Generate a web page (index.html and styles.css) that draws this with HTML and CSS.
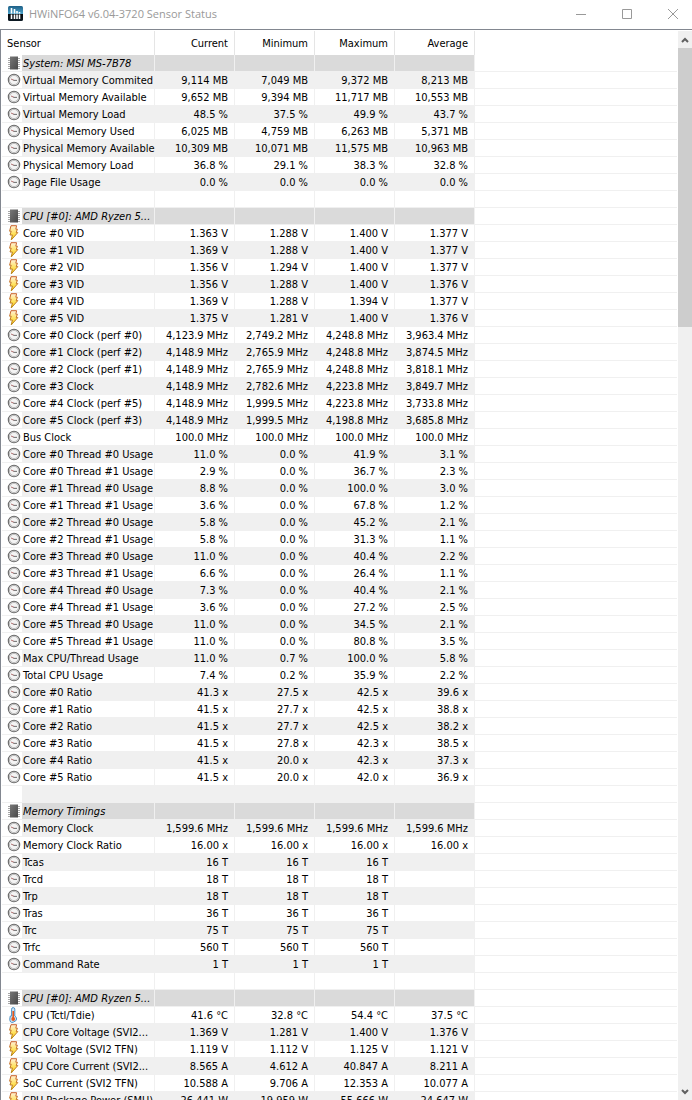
FILE: index.html
```html
<!DOCTYPE html>
<html lang="en">
<head>
<meta charset="utf-8">
<title>HWiNFO64 v6.04-3720 Sensor Status</title>
<link rel="stylesheet" href="styles.css">
</head>
<body>
<svg class="symbols" aria-hidden="true">
  <defs>
    <linearGradient id="bolt-fill" x1="0" y1="0" x2="0" y2="1">
      <stop offset="0" stop-color="#fff0d8"/>
      <stop offset="0.5" stop-color="#ffe468"/>
      <stop offset="1" stop-color="#f6c800"/>
    </linearGradient>
    <linearGradient id="bolt-edge" x1="0" y1="0" x2="0" y2="1">
      <stop offset="0" stop-color="#c9622c"/>
      <stop offset="1" stop-color="#b98a20"/>
    </linearGradient>
    <linearGradient id="chip-fill" x1="0" y1="0" x2="1" y2="1">
      <stop offset="0" stop-color="#777"/>
      <stop offset="1" stop-color="#484848"/>
    </linearGradient>
    <linearGradient id="logo-fill" x1="0" y1="0" x2="0" y2="1">
      <stop offset="0" stop-color="#1d5f86"/>
      <stop offset="0.5" stop-color="#4aa0c8"/>
      <stop offset="0.56" stop-color="#05090d"/>
      <stop offset="1" stop-color="#0d1a24"/>
    </linearGradient>
    <symbol id="clock" viewBox="0 0 14 16">
      <circle cx="7" cy="8" r="5.7" fill="#f4f4f4" stroke="#6a6a6a" stroke-width="1.1"/>
      <circle cx="7" cy="8" r="4.6" fill="none" stroke="#bcbcbc" stroke-width="1"/>
      <path d="M4 7L7 8.3" stroke="#b07070" stroke-width="1"/>
      <path d="M6.5 8.4H10" stroke="#777" stroke-width="1.1"/>
    </symbol>
    <symbol id="chip" viewBox="0 0 14 16">
      <path d="M1 3.5H13M1 5.5H13M1 7.5H13M1 9.5H13M1 11.5H13M1 13.5H13" stroke="#a8a8a8" stroke-width="1"/>
      <rect x="3" y="1.5" width="8" height="13" fill="url(#chip-fill)"/>
    </symbol>
    <symbol id="bolt" viewBox="0 0 14 16">
      <path d="M4 .7H9.6L8.8 4.2H10.4L9.2 7.6H10.8L4.2 15L5.4 10H3L4.2 6.2H2.6Z" fill="url(#bolt-fill)" stroke="url(#bolt-edge)" stroke-width="1"/>
    </symbol>
    <symbol id="thermo" viewBox="0 0 14 16">
      <path d="M4.6 9V2.2Q4.6 .6 6.2 .6T7.8 2.2V9Q9.6 10 9.6 12T6.2 15.2T2.8 12T4.6 9Z" fill="#cfe6f7" stroke="#4a8fc4" stroke-width="1"/>
      <path d="M6.2 4V12" stroke="#e2571e" stroke-width="1.6"/>
      <circle cx="6.2" cy="12" r="1.9" fill="#e2571e"/>
    </symbol>
  </defs>
</svg>

<div class="window">
  <header class="titlebar">
    <svg class="logo" viewBox="0 0 15 15" aria-hidden="true">
      <rect width="15" height="15" rx="1.5" fill="url(#logo-fill)"/>
      <path d="M3.5 2V7.5M6.5 3V7.5M9 5V7.5M11.5 6V7.5M3.5 8.5V13M6.5 8.5V13M9 8.5V13M11.5 8.5V13" stroke="#fff" stroke-width="1.6"/>
    </svg>
    <h1 class="title">HWiNFO64 v6.04-3720 Sensor Status</h1>
    <div class="controls">
      <button class="control" type="button" aria-label="Minimize"><svg viewBox="0 0 10 10"><path d="M0 5.5H10"/></svg></button>
      <button class="control" type="button" aria-label="Maximize"><svg viewBox="0 0 10 10"><path d="M.5 .5H9.5V9.5H.5Z"/></svg></button>
      <button class="control" type="button" aria-label="Close"><svg viewBox="0 0 10 10"><path d="M0 0L10 10M10 0L0 10"/></svg></button>
    </div>
  </header>
  <main class="content">
    <div class="list">
      <table class="sensors">
        <colgroup><col class="col-name"><col class="col-value"><col class="col-value"><col class="col-value"><col class="col-value"><col></colgroup>
        <thead>
          <tr><th scope="col">Sensor</th><th scope="col">Current</th><th scope="col">Minimum</th><th scope="col">Maximum</th><th scope="col">Average</th><td class="rest"></td></tr>
        </thead>
        <tbody id="rows"></tbody>
      </table>
    </div>
    <div class="scrollbar">
      <button class="arrow" type="button" aria-label="Scroll up"><svg viewBox="0 0 8 6"><path d="M1 5L4 2L7 5"/></svg></button>
      <div class="track"><div class="thumb"></div></div>
      <button class="arrow" type="button" aria-label="Scroll down"><svg viewBox="0 0 8 6"><path d="M1 1L4 4L7 1"/></svg></button>
    </div>
  </main>
</div>
<script src="sensors.js"></script>
</body>
</html>
```
FILE: styles.css
```css
* { box-sizing: border-box; }

body {
  margin: 0;
  background: #fff;
  color: #000;
  font-family: "DejaVu Sans Condensed", "DejaVu Sans", sans-serif;
  font-size: 11px;
}

.symbols { position: absolute; width: 0; height: 0; }

.window {
  display: flex;
  flex-direction: column;
  height: 100vh;
  overflow: hidden;
}

.titlebar {
  display: flex;
  align-items: center;
  flex: none;
  height: 29px;
  padding: 0 4px 2px 8px;
}

.logo { width: 15px; height: 15px; }

.title {
  flex: 1;
  margin: 0 0 0 6px;
  color: #999;
  font: 400 11px/16px "Open Sans", sans-serif;
}

.controls { display: flex; gap: 16px; }

.control {
  display: grid;
  place-items: center;
  width: 30px;
  height: 26px;
  padding: 0;
  border: 0;
  background: none;
}

.control svg {
  width: 10px;
  height: 10px;
  fill: none;
  stroke: #999;
  stroke-width: 1;
}

.content {
  display: flex;
  flex: 1;
  min-height: 0;
  padding-top: 1px;
  border-top: 1px solid #828790;
  border-left: 1px solid #828790;
}

.list {
  flex: 1;
  min-width: 0;
  margin: 0 1px;
  overflow: hidden;
}

.sensors {
  width: 100%;
  table-layout: fixed;
  border-collapse: separate;
  border-spacing: 0;
}

.col-name { width: 153px; }
.col-value { width: 80px; }

.sensors th,
.sensors td {
  height: 17px;
  padding: 2px 6px 0 0;
  border-right: 1px solid #f0f0f0;
  border-bottom: 1px solid #f0f0f0;
  font-weight: 400;
  line-height: 14px;
  text-align: right;
  white-space: nowrap;
}

.sensors thead th {
  height: 24px;
  border-right-color: #e5e5e5;
  border-bottom: 0;
}

.sensors thead th:first-child { padding-left: 5px; text-align: left; }
.sensors thead .rest { border-bottom: 0; }
.sensors .rest { border-right: 0; background: #fff; }

.sensors tbody th { padding: 0; text-align: left; }
.sensors tbody tr:nth-child(even) { background: #f0f0f0; }
.sensors tbody tr.group { background: #dadada; }
.group .label { font-style: italic; }

.name { display: flex; height: 16px; }

.icon {
  flex: none;
  width: 20px;
  height: 16px;
  padding-left: 5px;
  background: #fff;
}

.icon svg { display: block; width: 14px; height: 16px; }

.label { padding: 2px 0 0 1px; }

.scrollbar {
  display: flex;
  flex-direction: column;
  flex: none;
  width: 14px;
  background: #f0f0f0;
}

.arrow {
  display: grid;
  place-items: center;
  height: 17px;
  padding: 0;
  border: 0;
  background: none;
}

.arrow svg {
  width: 8px;
  height: 6px;
  fill: none;
  stroke: #606060;
  stroke-width: 2;
}

.track { flex: 1; }
.thumb { height: 27%; background: #cdcdcd; }
```
FILE: sensors.js
```js
// Each line: icon | label | current | minimum | maximum | average
const data = `
chip|System: MSI MS-7B78
clock|Virtual Memory Commited|9,114 MB|7,049 MB|9,372 MB|8,213 MB
clock|Virtual Memory Available|9,652 MB|9,394 MB|11,717 MB|10,553 MB
clock|Virtual Memory Load|48.5 %|37.5 %|49.9 %|43.7 %
clock|Physical Memory Used|6,025 MB|4,759 MB|6,263 MB|5,371 MB
clock|Physical Memory Available|10,309 MB|10,071 MB|11,575 MB|10,963 MB
clock|Physical Memory Load|36.8 %|29.1 %|38.3 %|32.8 %
clock|Page File Usage|0.0 %|0.0 %|0.0 %|0.0 %
|
chip|CPU [#0]: AMD Ryzen 5...
bolt|Core #0 VID|1.363 V|1.288 V|1.400 V|1.377 V
bolt|Core #1 VID|1.369 V|1.288 V|1.400 V|1.377 V
bolt|Core #2 VID|1.356 V|1.294 V|1.400 V|1.377 V
bolt|Core #3 VID|1.356 V|1.288 V|1.400 V|1.376 V
bolt|Core #4 VID|1.369 V|1.288 V|1.394 V|1.377 V
bolt|Core #5 VID|1.375 V|1.281 V|1.400 V|1.376 V
clock|Core #0 Clock (perf #0)|4,123.9 MHz|2,749.2 MHz|4,248.8 MHz|3,963.4 MHz
clock|Core #1 Clock (perf #2)|4,148.9 MHz|2,765.9 MHz|4,248.8 MHz|3,874.5 MHz
clock|Core #2 Clock (perf #1)|4,148.9 MHz|2,765.9 MHz|4,248.8 MHz|3,818.1 MHz
clock|Core #3 Clock|4,148.9 MHz|2,782.6 MHz|4,223.8 MHz|3,849.7 MHz
clock|Core #4 Clock (perf #5)|4,148.9 MHz|1,999.5 MHz|4,223.8 MHz|3,733.8 MHz
clock|Core #5 Clock (perf #3)|4,148.9 MHz|1,999.5 MHz|4,198.8 MHz|3,685.8 MHz
clock|Bus Clock|100.0 MHz|100.0 MHz|100.0 MHz|100.0 MHz
clock|Core #0 Thread #0 Usage|11.0 %|0.0 %|41.9 %|3.1 %
clock|Core #0 Thread #1 Usage|2.9 %|0.0 %|36.7 %|2.3 %
clock|Core #1 Thread #0 Usage|8.8 %|0.0 %|100.0 %|3.0 %
clock|Core #1 Thread #1 Usage|3.6 %|0.0 %|67.8 %|1.2 %
clock|Core #2 Thread #0 Usage|5.8 %|0.0 %|45.2 %|2.1 %
clock|Core #2 Thread #1 Usage|5.8 %|0.0 %|31.3 %|1.1 %
clock|Core #3 Thread #0 Usage|11.0 %|0.0 %|40.4 %|2.2 %
clock|Core #3 Thread #1 Usage|6.6 %|0.0 %|26.4 %|1.1 %
clock|Core #4 Thread #0 Usage|7.3 %|0.0 %|40.4 %|2.1 %
clock|Core #4 Thread #1 Usage|3.6 %|0.0 %|27.2 %|2.5 %
clock|Core #5 Thread #0 Usage|11.0 %|0.0 %|34.5 %|2.1 %
clock|Core #5 Thread #1 Usage|11.0 %|0.0 %|80.8 %|3.5 %
clock|Max CPU/Thread Usage|11.0 %|0.7 %|100.0 %|5.8 %
clock|Total CPU Usage|7.4 %|0.2 %|35.9 %|2.2 %
clock|Core #0 Ratio|41.3 x|27.5 x|42.5 x|39.6 x
clock|Core #1 Ratio|41.5 x|27.7 x|42.5 x|38.8 x
clock|Core #2 Ratio|41.5 x|27.7 x|42.5 x|38.2 x
clock|Core #3 Ratio|41.5 x|27.8 x|42.3 x|38.5 x
clock|Core #4 Ratio|41.5 x|20.0 x|42.3 x|37.3 x
clock|Core #5 Ratio|41.5 x|20.0 x|42.0 x|36.9 x
|
chip|Memory Timings
clock|Memory Clock|1,599.6 MHz|1,599.6 MHz|1,599.6 MHz|1,599.6 MHz
clock|Memory Clock Ratio|16.00 x|16.00 x|16.00 x|16.00 x
clock|Tcas|16 T|16 T|16 T|
clock|Trcd|18 T|18 T|18 T|
clock|Trp|18 T|18 T|18 T|
clock|Tras|36 T|36 T|36 T|
clock|Trc|75 T|75 T|75 T|
clock|Trfc|560 T|560 T|560 T|
clock|Command Rate|1 T|1 T|1 T|
|
chip|CPU [#0]: AMD Ryzen 5...
thermo|CPU (Tctl/Tdie)|41.6 °C|32.8 °C|54.4 °C|37.5 °C
bolt|CPU Core Voltage (SVI2...|1.369 V|1.281 V|1.400 V|1.376 V
bolt|SoC Voltage (SVI2 TFN)|1.119 V|1.112 V|1.125 V|1.121 V
bolt|CPU Core Current (SVI2...|8.565 A|4.612 A|40.847 A|8.211 A
bolt|SoC Current (SVI2 TFN)|10.588 A|9.706 A|12.353 A|10.077 A
bolt|CPU Package Power (SMU)|26.441 W|19.959 W|55.666 W|24.647 W
`.trim().split("\n");

document.getElementById("rows").innerHTML = data.map((line) => {
  const [icon, label, ...values] = line.split("|");
  const cells = [0, 1, 2, 3].map((i) => `<td>${values[i] || ""}</td>`).join("");
  const image = icon ? `<svg aria-hidden="true"><use href="#${icon}"/></svg>` : "";
  const kind = icon === "chip" ? ' class="group"' : "";
  return `<tr${kind}><th scope="row"><div class="name"><span class="icon">${image}</span><span class="label">${label}</span></div></th>${cells}<td class="rest"></td></tr>`;
}).join("");
```
